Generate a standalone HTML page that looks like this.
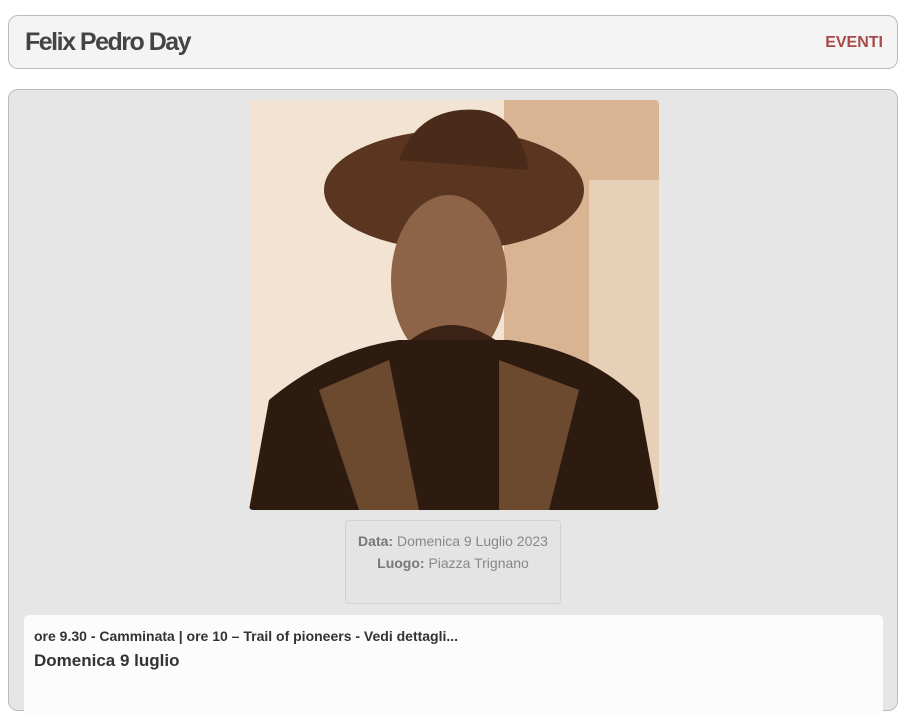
<!DOCTYPE html>
<html><head><meta charset="utf-8"><style>
body{margin:0;background:#fff;font-family:"Liberation Sans",sans-serif;width:910px;height:688px;overflow:hidden;position:relative}
.hdr{position:absolute;left:8px;top:15px;width:888px;height:52px;background:#f4f4f4;border:1px solid #bbb;border-radius:10px}
.hdr .t{position:absolute;left:16px;top:12px;font-size:25px;font-weight:bold;color:#444;letter-spacing:-1.5px}
.hdr .e{position:absolute;right:14px;top:18px;font-size:16px;font-weight:bold;color:#a84848}
.main{position:absolute;left:8px;top:89px;width:888px;height:620px;background:#e6e6e6;border:1px solid #bbb;border-radius:10px}
.img{position:absolute;left:240px;top:10px;width:410px;height:410px;border-radius:4px;overflow:hidden}
.info{position:absolute;left:336px;top:430px;width:216px;height:84px;border:1px solid #d2d2d2;border-radius:4px;background:#e4e4e4;text-align:center;font-size:14px;color:#888;line-height:22px;padding-top:9px;box-sizing:border-box}
.info b{color:#777}
.card{position:absolute;left:15px;top:525px;width:859px;height:100px;background:#fcfcfc;border-radius:5px}
.card .a{position:absolute;left:10px;top:13px;font-size:14px;font-weight:bold;color:#333}
.card .b{position:absolute;left:10px;top:36px;font-size:17px;font-weight:bold;color:#333}
</style></head><body>
<div class="hdr"><div class="t">Felix Pedro Day</div><div class="e">EVENTI</div></div>
<div class="main">
<div class="img"><svg width="410" height="410" viewBox="0 0 410 410">
<rect width="410" height="410" fill="#f3e3d3"/>
<rect x="255" y="0" width="155" height="410" fill="#d9b493"/>
<rect x="340" y="80" width="70" height="330" fill="#e8d0b8"/>
<ellipse cx="205" cy="90" rx="130" ry="60" fill="#5a3520"/>
<path d="M150 60 Q170 5 230 10 Q270 15 280 70 Z" fill="#4a2a18"/>
<ellipse cx="200" cy="180" rx="58" ry="85" fill="#8e6448"/>
<path d="M150 250 Q200 200 260 250 L260 300 L150 300Z" fill="#3a2214"/>
<path d="M0 410 L20 300 Q80 250 150 240 L260 240 Q340 250 390 300 L410 410Z" fill="#2e1b10"/>
<path d="M70 290 L140 260 L170 410 L110 410Z" fill="#6b4a30"/>
<path d="M250 260 L330 290 L300 410 L250 410Z" fill="#6b4a30"/>
</svg></div>
<div class="info"><b>Data:</b> Domenica 9 Luglio 2023<br><b>Luogo:</b> Piazza Trignano</div>
<div class="card"><div class="a">ore 9.30 - Camminata | ore 10 – Trail of pioneers - Vedi dettagli...</div><div class="b">Domenica 9 luglio</div></div>
</div>
</body></html>
